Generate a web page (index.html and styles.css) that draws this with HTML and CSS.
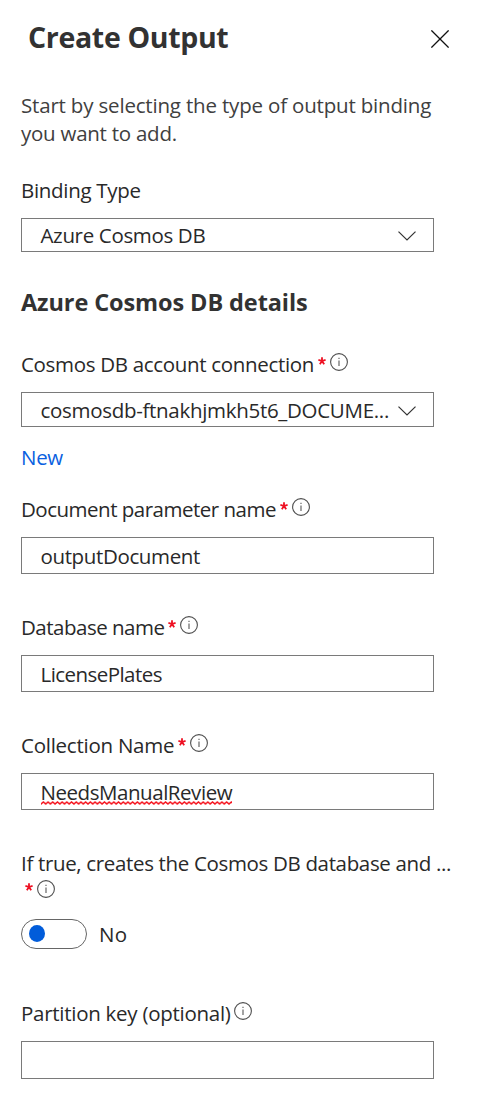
FILE: index.html
```html
<!DOCTYPE html>
<html lang="en">
<head>
<meta charset="utf-8">
<title>Create Output</title>
<link rel="stylesheet" href="styles.css">
</head>
<body>
<svg class="defs" width="0" height="0" aria-hidden="true">
  <symbol id="info" viewBox="0 0 18 18"><circle cx="9" cy="9" r="8.4" fill="none" stroke="#4f4f4f" stroke-width="1.1"/><path d="M9 7.4v5.6M9 4.7v1.4" stroke="#666" stroke-width="1.2"/></symbol>
  <symbol id="chevron" viewBox="0 0 18 10"><path d="M.5.6 9 9 17.5.6" fill="none" stroke="#333" stroke-width="1.2"/></symbol>
  <symbol id="star" viewBox="0 0 8 8"><path d="M4 4V.2M4 4 .4 2.9M4 4l3.6-1.1M4 4 1.8 7.2M4 4l2.2 3.2" fill="none" stroke="#ee1123" stroke-width="1.8"/></symbol>
</svg>
<main class="panel">
  <header class="header">
    <h1 class="title">Create Output</h1>
    <svg class="close" viewBox="0 0 18 18"><path d="M.4.4l17.2 17.2M17.6.4.4 17.6" stroke="#111" stroke-width="1.3"/></svg>
  </header>
  <p class="intro"><span class="intro-first">Start by selecting the type of output binding</span><br><span class="intro-second">you want to add.</span></p>

  <div class="label label-binding"><span class="t-binding">Binding Type</span></div>
  <div class="box select select-type"><span class="t-azure">Azure Cosmos DB</span><svg class="chevron"><use href="#chevron"/></svg></div>

  <h2 class="section">Azure Cosmos DB details</h2>

  <div class="label label-account"><span class="t-account">Cosmos DB account connection</span><svg class="star"><use href="#star"/></svg><svg class="info"><use href="#info"/></svg></div>
  <div class="box select select-account"><span class="t-cosmosdb">cosmosdb-ftnakhjmkh5t6_DOCUME...</span><svg class="chevron"><use href="#chevron"/></svg></div>
  <a class="new">New</a>

  <div class="label label-document"><span class="t-document">Document parameter name</span><svg class="star"><use href="#star"/></svg><svg class="info"><use href="#info"/></svg></div>
  <div class="box"><span class="t-output">outputDocument</span></div>

  <div class="label label-field"><span class="t-database">Database name</span><svg class="star"><use href="#star"/></svg><svg class="info"><use href="#info"/></svg></div>
  <div class="box"><span class="t-license">LicensePlates</span></div>

  <div class="label label-field"><span class="t-collection">Collection Name</span><svg class="star"><use href="#star"/></svg><svg class="info"><use href="#info"/></svg></div>
  <div class="box"><span class="t-needs">NeedsManualReview<svg class="squiggle"><defs><pattern id="wave" width="4.7" height="4" patternUnits="userSpaceOnUse"><path d="M-2.35 1 0 3 2.35 1 4.7 3 7.05 1" fill="none" stroke="#f5141e" stroke-width="1.5"/></pattern></defs><rect width="100%" height="4" fill="url(#wave)"/></svg></span></div>

  <div class="label label-create"><span class="t-create">If true, creates the Cosmos DB database and ...</span></div>
  <div class="marks"><svg class="star"><use href="#star"/></svg><svg class="info"><use href="#info"/></svg></div>
  <div class="toggle-row"><span class="toggle"><span class="knob"></span></span><span class="t-no">No</span></div>

  <div class="label label-partition"><span class="t-partition">Partition key (optional)</span><svg class="info"><use href="#info"/></svg></div>
  <div class="box box-partition"></div>
</main>
</body>
</html>
```
FILE: styles.css
```css
* { box-sizing: border-box; }
body { margin: 0; background: #fff; color: #292929; font: 20.5px/28px "Open Sans", "Noto Sans", sans-serif; }
.defs { display: block; }
.panel { height: 1097px; padding: 17px 0 0 21px; overflow: hidden; white-space: nowrap; }
svg { flex: none; }
.header { display: flex; justify-content: space-between; height: 40px; padding: 0 36px 0 7px; }
.title { margin: 0; font-size: 28.5px; line-height: 40px; font-weight: 700; color: #323232; letter-spacing: -.33px; }
.close { width: 18px; height: 18px; margin-top: 13px; }
.intro { margin: 34px 0 0; color: #404040; }
.label { display: flex; height: 28px; }
.label-binding { margin-top: 29px; }
.label-account { margin-top: 33px; }
.label-document { margin-top: 24px; }
.label-field { margin-top: 39px; }
.label-create { margin-top: 39px; }
.label-partition { margin-top: 50px; }
.box { display: flex; align-items: center; width: 413px; height: 37px; margin-top: 14px; padding: 0 17.5px 0 18.5px; border: 1px solid #7a7a7a; }
.select { justify-content: space-between; }
.select-type { height: 34px; margin-top: 14px; }
.select-account { height: 35px; }
.box-partition { height: 38px; }
.chevron { width: 18px; height: 10px; margin-top: 2px; }
.section { margin: 35px 0 0; height: 30px; font-size: 23.5px; line-height: 30px; font-weight: 700; color: #323232; letter-spacing: -.1px; }
.new { display: block; margin-top: 16px; color: #0a60e0; letter-spacing: -.3px; }
.star { width: 8px; height: 8px; margin: 7px 0 0 4px; }
.info { width: 18px; height: 18px; margin: 2.5px 0 0 4px; }
.t-partition + .info { margin-left: 3px; }
.marks { display: flex; height: 28px; }
.marks .star { margin-top: 6px; }
.toggle-row { display: flex; height: 30px; margin-top: 14px; }
.toggle { width: 66px; height: 30px; margin-right: 12px; padding: 5px 0 0 7px; border: 1px solid #666; border-radius: 15px; }
.knob { display: block; width: 16px; height: 17px; border-radius: 50%; background: #015cda; }

/* Tracking for each run of text */
.intro-first { letter-spacing: -.18px; }
.intro-second { letter-spacing: -.25px; }
.t-binding { letter-spacing: -.3px; }
.t-azure { letter-spacing: -.34px; }
.t-account { letter-spacing: -.32px; }
.t-cosmosdb { letter-spacing: -.3px; }
.t-document { letter-spacing: -.5px; }
.t-output { letter-spacing: -.37px; }
.t-database { letter-spacing: -.5px; }
.t-license { letter-spacing: -.55px; }
.t-collection { letter-spacing: -.25px; }
.t-create { letter-spacing: -.34px; }
.t-partition { letter-spacing: -.27px; }
.t-no { padding-top: 1px; letter-spacing: .3px; }
.t-needs { position: relative; letter-spacing: -.45px; }

/* Spelling mark beneath the word */
.squiggle { position: absolute; left: 0; bottom: 1px; width: 100%; height: 4px; }
```
